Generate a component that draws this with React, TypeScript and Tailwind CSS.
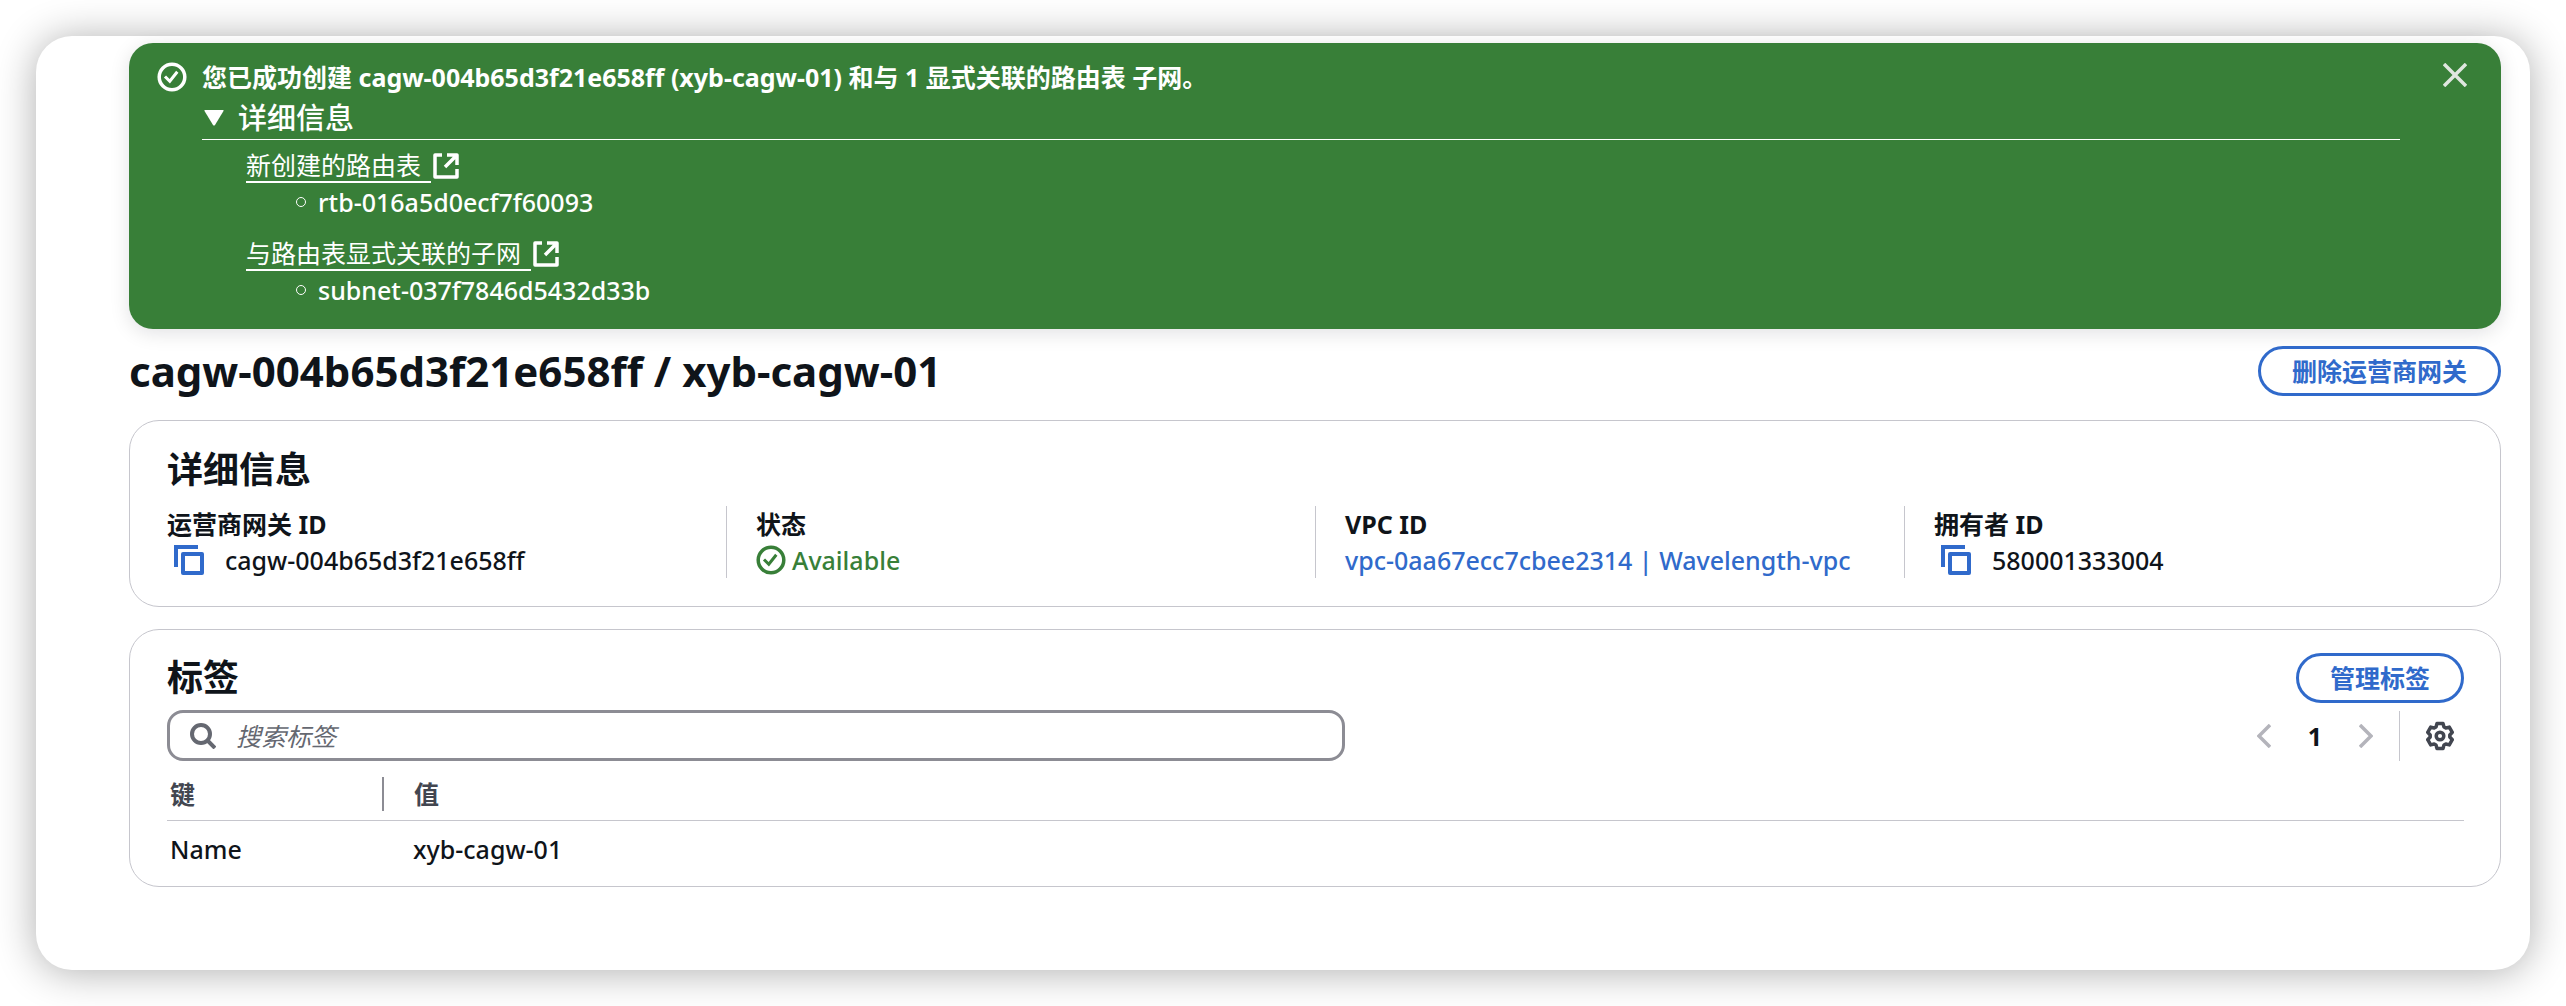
import React from 'react';

interface IconProps {
  className?: string;
}

const StatusIcon: React.FC<IconProps> = ({ className }) => (
  <svg viewBox="0 0 30 30" fill="none" stroke="currentColor" strokeWidth="3.5" className={className} aria-hidden="true">
    <circle cx="15" cy="15" r="12.8" />
    <path d="M8 14.500l4.800 4.800 7.500-9.500" strokeWidth="3" />
  </svg>
);

const ExternalIcon: React.FC<IconProps> = ({ className }) => (
  <svg viewBox="0 0 26 26" fill="none" stroke="currentColor" strokeWidth="3.5" strokeLinejoin="round" className={className} aria-hidden="true">
    <path d="M9 2H2v22h22v-8" />
    <path d="M14 2h10v10M23 3L12 14" />
  </svg>
);

const CopyIcon: React.FC<IconProps> = ({ className }) => (
  <svg viewBox="0 0 30 30" fill="none" stroke="currentColor" strokeWidth="4" className={className} aria-hidden="true">
    <path d="M2 22V2h22" />
    <path d="M9 9h19v19H9z" strokeLinejoin="round" />
  </svg>
);

const CloseIcon: React.FC<IconProps> = ({ className }) => (
  <svg viewBox="0 0 24 24" fill="none" stroke="currentColor" strokeWidth="3.5" className={className} aria-hidden="true">
    <path d="M1 1l22 22M23 1L1 23" />
  </svg>
);

const SearchIcon: React.FC<IconProps> = ({ className }) => (
  <svg viewBox="0 0 26 26" fill="none" stroke="currentColor" strokeWidth="4" className={className} aria-hidden="true">
    <circle cx="11" cy="11" r="9" />
    <path d="M17 17l8 8" />
  </svg>
);

const ChevronIcon: React.FC<IconProps> = ({ className }) => (
  <svg viewBox="0 0 14 24" fill="none" stroke="currentColor" strokeWidth="3.5" className={className} aria-hidden="true">
    <path d="M13 1L2 12l11 11" />
  </svg>
);

const GearIcon: React.FC<IconProps> = ({ className }) => (
  <svg viewBox="0 0 28 30" fill="none" stroke="currentColor" strokeWidth="3.5" strokeLinejoin="round" className={className} aria-hidden="true">
    <path d="M10 6L11 2.500h6L18 6l1.800 1 3.500-.9 3 5.200-2.500 2.700v2l2.500 2.700-3 5.200-3.500-.9-1.800 1-1 3.500h-6L10 24l-1.800-1-3.500.9-3-5.200L4.200 16v-2l-2.500-2.700 3-5.200 3.500.9z" />
    <circle cx="14" cy="15" r="3.8" />
  </svg>
);

interface BannerEntryProps {
  label: string;
  value: string;
}

const BannerEntry: React.FC<BannerEntryProps> = ({ label, value }) => (
  <div>
    <a href="#" className="flex h-9 items-center gap-[2px]">
      <span className="border-b-2 border-white pr-[10px] font-normal leading-[32px]">{label}</span>
      <ExternalIcon className="size-[26px]" />
    </a>
    <ul>
      <li className="flex h-9 items-center gap-3 pl-[50px]">
        <span className="size-[10px] rounded-full border border-white" />
        {value}
      </li>
    </ul>
  </div>
);

const SuccessBanner: React.FC = () => (
  <section className="flex items-start rounded-3xl bg-[#387f38] pt-[15px] pr-[34px] pb-[21px] pl-7 text-white shadow-[0_4px_20px_rgba(0,7,22,0.12)]">
    <StatusIcon className="mt-1 size-[30px] shrink-0" />
    <div className="ml-[15px] flex-1">
      <p className="font-bold leading-[38px]">
        您已成功创建 cagw-004b65d3f21e658ff (xyb-cagw-01) 和与 1 显式关联的路由表 子网。
      </p>
      <button type="button" aria-expanded="true" className="flex h-11 w-full items-center gap-[14px] border-b border-white pl-[2px] text-[29px]">
        <svg viewBox="0 0 20 16" fill="currentColor" className="h-4 w-5" aria-hidden="true">
          <path d="M1 0h18q1 0 .5 1L11 15q-1 1-2 0L.5 1Q0 0 1 0z" />
        </svg>
        详细信息
      </button>
      <div className="flex flex-col gap-4 pt-2 pl-11">
        <BannerEntry label="新创建的路由表" value="rtb-016a5d0ecf7f60093" />
        <BannerEntry label="与路由表显式关联的子网" value="subnet-037f7846d5432d33b" />
      </div>
    </div>
    <button type="button" aria-label="关闭" className="mt-[5px] ml-[43px] text-[#dfe6df]">
      <CloseIcon className="size-6" />
    </button>
  </section>
);

interface PillButtonProps {
  children: React.ReactNode;
}

const PillButton: React.FC<PillButtonProps> = ({ children }) => (
  <button type="button" className="h-[50px] rounded-full border-3 border-[#306acb] px-[31px] font-bold leading-none text-[#306acb]">
    {children}
  </button>
);

interface DetailProps {
  label: string;
  children: React.ReactNode;
}

const Detail: React.FC<DetailProps> = ({ label, children }) => (
  <div className="-ml-[30px] border-l border-[#c6c6cd] pl-[29px] first:border-transparent">
    <dt className="font-bold leading-9">{label}</dt>
    <dd className="flex h-9 items-center">{children}</dd>
  </div>
);

const DetailsPanel: React.FC = () => (
  <section className="mt-6 rounded-[30px] border border-[#c6c6cd] px-[37px] pt-6 pb-7">
    <h2 className="text-[36px] font-bold leading-[50px]">详细信息</h2>
    <dl className="mt-[11px] grid grid-cols-4 gap-x-[60px]">
      <Detail label="运营商网关 ID">
        <button type="button" aria-label="复制" className="mx-[7px] text-[#306acb]">
          <CopyIcon className="size-[30px]" />
        </button>
        <span className="pl-[14px]">cagw-004b65d3f21e658ff</span>
      </Detail>
      <Detail label="状态">
        <span className="flex items-center gap-[6px] text-[#387f38]">
          <StatusIcon className="size-[30px]" />
          Available
        </span>
      </Detail>
      <Detail label="VPC ID">
        <a href="#" className="text-[#306acb]">vpc-0aa67ecc7cbee2314 | Wavelength-vpc</a>
      </Detail>
      <Detail label="拥有者 ID">
        <button type="button" aria-label="复制" className="mx-[7px] text-[#306acb]">
          <CopyIcon className="size-[30px]" />
        </button>
        <span className="pl-[14px]">580001333004</span>
      </Detail>
    </dl>
  </section>
);

const TagsPanel: React.FC = () => (
  <section className="mt-[22px] rounded-[30px] border border-[#c6c6cd] pt-[23px] pr-9 pb-[18px] pl-[37px]">
    <div className="flex items-center justify-between">
      <h2 className="text-[36px] font-bold leading-[50px]">标签</h2>
      <PillButton>管理标签</PillButton>
    </div>
    <div className="mt-[7px] flex items-center justify-between">
      <label className="flex h-[51px] w-[calc(50%+29px)] items-center rounded-2xl border-3 border-[#8c8c94] pl-5 text-[#656871]">
        <SearchIcon className="size-[26px]" />
        <input type="search" aria-label="搜索标签" placeholder="搜索标签" className="ml-5 flex-1 bg-transparent font-normal outline-none placeholder:text-[#656871] placeholder:italic" />
      </label>
      <div className="flex items-center">
        <button type="button" aria-label="上一页" className="text-[#b4b4bb]">
          <ChevronIcon className="h-6 w-[14px]" />
        </button>
        <button type="button" className="mx-[37px] font-bold">1</button>
        <button type="button" aria-label="下一页" className="text-[#b4b4bb]">
          <ChevronIcon className="h-6 w-[14px] rotate-180" />
        </button>
        <span className="ml-[26px] h-[50px] w-px bg-[#c6c6cd]" />
        <button type="button" aria-label="首选项" className="mr-[10px] ml-[26px] text-[#424650]">
          <GearIcon className="h-[30px] w-7" />
        </button>
      </div>
    </div>
    <table className="mt-2 w-full table-fixed text-left">
      <thead className="text-[#424650]">
        <tr className="border-b border-[#c6c6cd]">
          <th className="h-[51px] w-[217px] p-0 pl-[3px]">
            <div className="flex h-[34px] items-center border-r-2 border-[#8c8c94] font-bold leading-none">键</div>
          </th>
          <th className="p-0 pl-[30px] font-bold leading-none">值</th>
        </tr>
      </thead>
      <tbody>
        <tr>
          <td className="h-12 p-0 pt-[10px] pl-[3px]">Name</td>
          <td className="h-12 p-0 pt-[10px] pl-[29px]">xyb-cagw-01</td>
        </tr>
      </tbody>
    </table>
  </section>
);

const App: React.FC = () => {
  return (
    <div className="bg-white p-9 font-['Noto_Sans','Noto_Sans_CJK_SC',sans-serif] text-[25px] font-medium leading-9 text-[#0f141a]">
      <main className="rounded-[36px] bg-white pt-[7px] pr-[29px] pb-[83px] pl-[93px] shadow-[0_2px_40px_rgba(0,0,0,0.32)]">
        <SuccessBanner />
        <header className="mt-[17px] flex items-center justify-between">
          <h1 className="text-[42px] font-bold leading-[50px]">cagw-004b65d3f21e658ff / xyb-cagw-01</h1>
          <PillButton>删除运营商网关</PillButton>
        </header>
        <DetailsPanel />
        <TagsPanel />
      </main>
    </div>
  );
};

export default App;
